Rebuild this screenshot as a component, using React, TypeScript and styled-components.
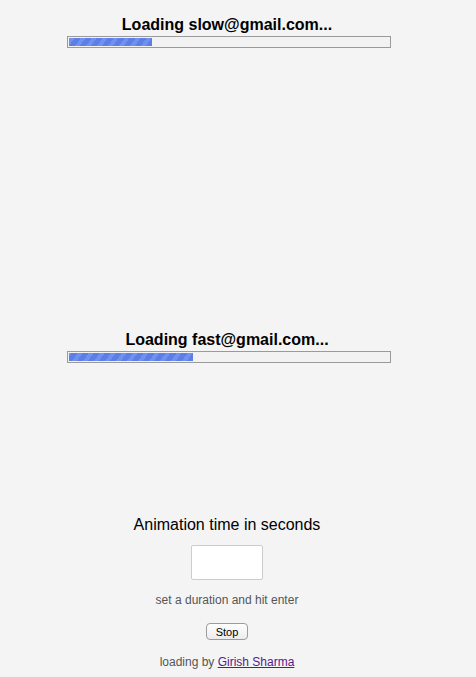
import React from 'react'
import styled, { createGlobalStyle } from 'styled-components'

const GlobalStyle = createGlobalStyle`
  html, body {
    margin: 0;
    padding: 0;
    background: #f4f4f4;
    font-family: "Liberation Sans", Arial, sans-serif;
  }
`

const Page = styled.div`
  width: 454px;
  display: flex;
  flex-direction: column;
  align-items: center;
`

const LoaderBlock = styled.section<{ $height: number }>`
  height: ${p => p.$height}px;
  padding-top: 15px;
  box-sizing: border-box;
  display: flex;
  flex-direction: column;
  align-items: center;
`

const LoaderTitle = styled.h2`
  margin: 0 0 1px 0;
  font-size: 16px;
  line-height: 20px;
  font-weight: bold;
  color: #000;
`

const Track = styled.div`
  width: 324px;
  height: 12px;
  box-sizing: border-box;
  border: 1px solid #9a9a9a;
  background: #f2f2f2;
  padding: 1px;
  margin-left: 3px;
`

const Fill = styled.div`
  height: 100%;
  background-color: #5b7ee8;
  background-image: repeating-linear-gradient(
    -55deg,
    #5b7ee8 0px,
    #5b7ee8 5px,
    #7391ec 5px,
    #7391ec 9px
  );
`

const Controls = styled.div`
  display: flex;
  flex-direction: column;
  align-items: center;
`

const Heading = styled.h3`
  margin: 0;
  font-size: 16px;
  line-height: 20px;
  font-weight: normal;
  color: #000;
`

const DurationInput = styled.input`
  width: 72px;
  height: 35px;
  box-sizing: border-box;
  margin-top: 10px;
  border: 1px solid #cccccc;
  border-radius: 2px;
  background: #fff;
  outline: none;
`

const Hint = styled.p`
  margin: 12px 0 0 0;
  font-size: 12px;
  line-height: 16px;
  color: #555;
`

const StopButton = styled.button`
  margin-top: 15px;
  width: 42px;
  height: 17px;
  padding: 0;
  border: 1px solid #9c9c9c;
  border-radius: 4px;
  background: linear-gradient(#ffffff, #ececec);
  font-family: "Liberation Sans", Arial, sans-serif;
  font-size: 11px;
  color: #000;
  line-height: 14px;
`

const Credit = styled.p`
  margin: 14px 0 0 0;
  font-size: 12px;
  line-height: 16px;
  color: #555;

  a {
    color: #551a8b;
  }
`

interface LoaderProps {
  email: string
  progress: number
  height: number
}

const Loader: React.FC<LoaderProps> = ({ email, progress, height }) => (
  <LoaderBlock $height={height}>
    <LoaderTitle>Loading {email}...</LoaderTitle>
    <Track>
      <Fill style={{ width: `${progress}%` }} />
    </Track>
  </LoaderBlock>
)

const App: React.FC = () => {
  return (
    <>
      <GlobalStyle />
      <Page>
        <Loader email="slow@gmail.com" progress={26} height={315} />
        <Loader email="fast@gmail.com" progress={39} height={200} />
        <Controls>
          <Heading>Animation time in seconds</Heading>
          <DurationInput type="text" />
          <Hint>set a duration and hit enter</Hint>
          <StopButton>Stop</StopButton>
          <Credit>
            loading by <a href="#">Girish Sharma</a>
          </Credit>
        </Controls>
      </Page>
    </>
  )
}

export default App
